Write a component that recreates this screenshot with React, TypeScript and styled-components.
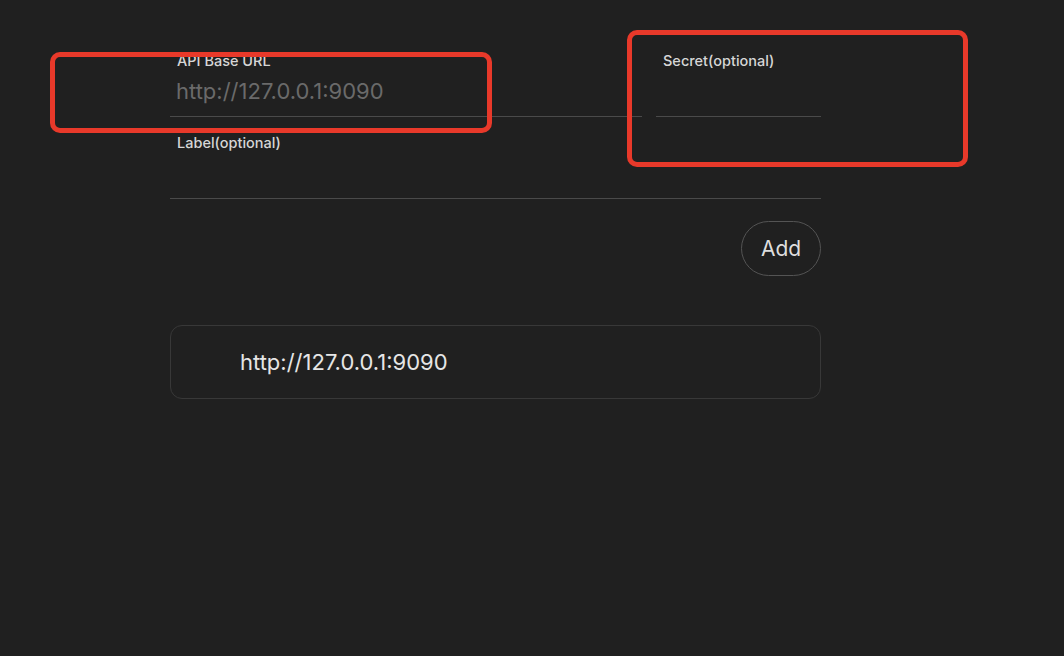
import styled, { createGlobalStyle } from 'styled-components';

const endpoints = ['http://127.0.0.1:9090'];

export default function App() {
  return (
    <>
      <GlobalStyle />
      <SPage>
        <SForm>
          <SFieldRow>
            <SField>
              <SLabel>API Base URL</SLabel>
              <SInput placeholder="http://127.0.0.1:9090" />
            </SField>
            <SField>
              <SLabel>Secret(optional)</SLabel>
              <SInput type="password" />
            </SField>
          </SFieldRow>
          <SField>
            <SLabel>Label(optional)</SLabel>
            <SInput />
          </SField>
          <SActions>
            <SAddButton>Add</SAddButton>
          </SActions>
          <SList>
            {endpoints.map((url) => (
              <SItem key={url}>{url}</SItem>
            ))}
          </SList>
        </SForm>

        {/* annotation boxes drawn over the screenshot */}
        <SMark left={50} top={52} width={442} height={81} />
        <SMark left={627} top={30} width={341} height={137} />
      </SPage>
    </>
  );
}

const GlobalStyle = createGlobalStyle`
  html, body {
    margin: 0;
    padding: 0;
    background: #202020;
  }
  body {
    font-family: Inter, "Noto Sans", "Liberation Sans", sans-serif;
    color: #dcdcdc;
  }
  * {
    box-sizing: border-box;
  }
`;

const SPage = styled.div`
  position: relative;
  min-height: 100vh;
  padding: 52px 0 0 170px;
  background: #202020;
`;

const SForm = styled.div`
  width: 651px;
  display: flex;
  flex-direction: column;
`;

const SFieldRow = styled.div`
  display: grid;
  grid-template-columns: 1fr 165px;
  column-gap: 14px;
  margin-bottom: 17px;
`;

const SField = styled.label`
  display: flex;
  flex-direction: column;
  border-bottom: 1px solid #4a4a4a;
`;

const SLabel = styled.span`
  padding-left: 7px;
  font-size: 14.5px;
  font-weight: 500;
  line-height: 18px;
  color: #d6d6d6;
`;

const SInput = styled.input`
  height: 46px;
  padding: 0 6px 5px;
  border: none;
  outline: none;
  background: transparent;
  font-family: inherit;
  font-size: 22px;
  color: #e0e0e0;
  &::placeholder {
    color: #6a6a6a;
  }
`;

const SActions = styled.div`
  display: flex;
  justify-content: flex-end;
  margin-top: 22px;
`;

const SAddButton = styled.button`
  width: 80px;
  height: 55px;
  border: 1px solid #545454;
  border-radius: 999px;
  background: transparent;
  font-family: inherit;
  font-size: 21px;
  color: #dedede;
`;

const SList = styled.ul`
  list-style: none;
  margin: 49px 0 0;
  padding: 0;
  display: flex;
  flex-direction: column;
  gap: 12px;
`;

const SItem = styled.li`
  height: 74px;
  display: flex;
  align-items: center;
  padding-left: 69px;
  border: 1px solid #383838;
  border-radius: 12px;
  font-size: 22px;
  color: #e6e6e6;
`;

const SMark = styled.div<{ left: number; top: number; width: number; height: number }>`
  position: absolute;
  left: ${(p) => p.left}px;
  top: ${(p) => p.top}px;
  width: ${(p) => p.width}px;
  height: ${(p) => p.height}px;
  border: 5px solid #e8392a;
  border-radius: 10px;
  pointer-events: none;
`;
